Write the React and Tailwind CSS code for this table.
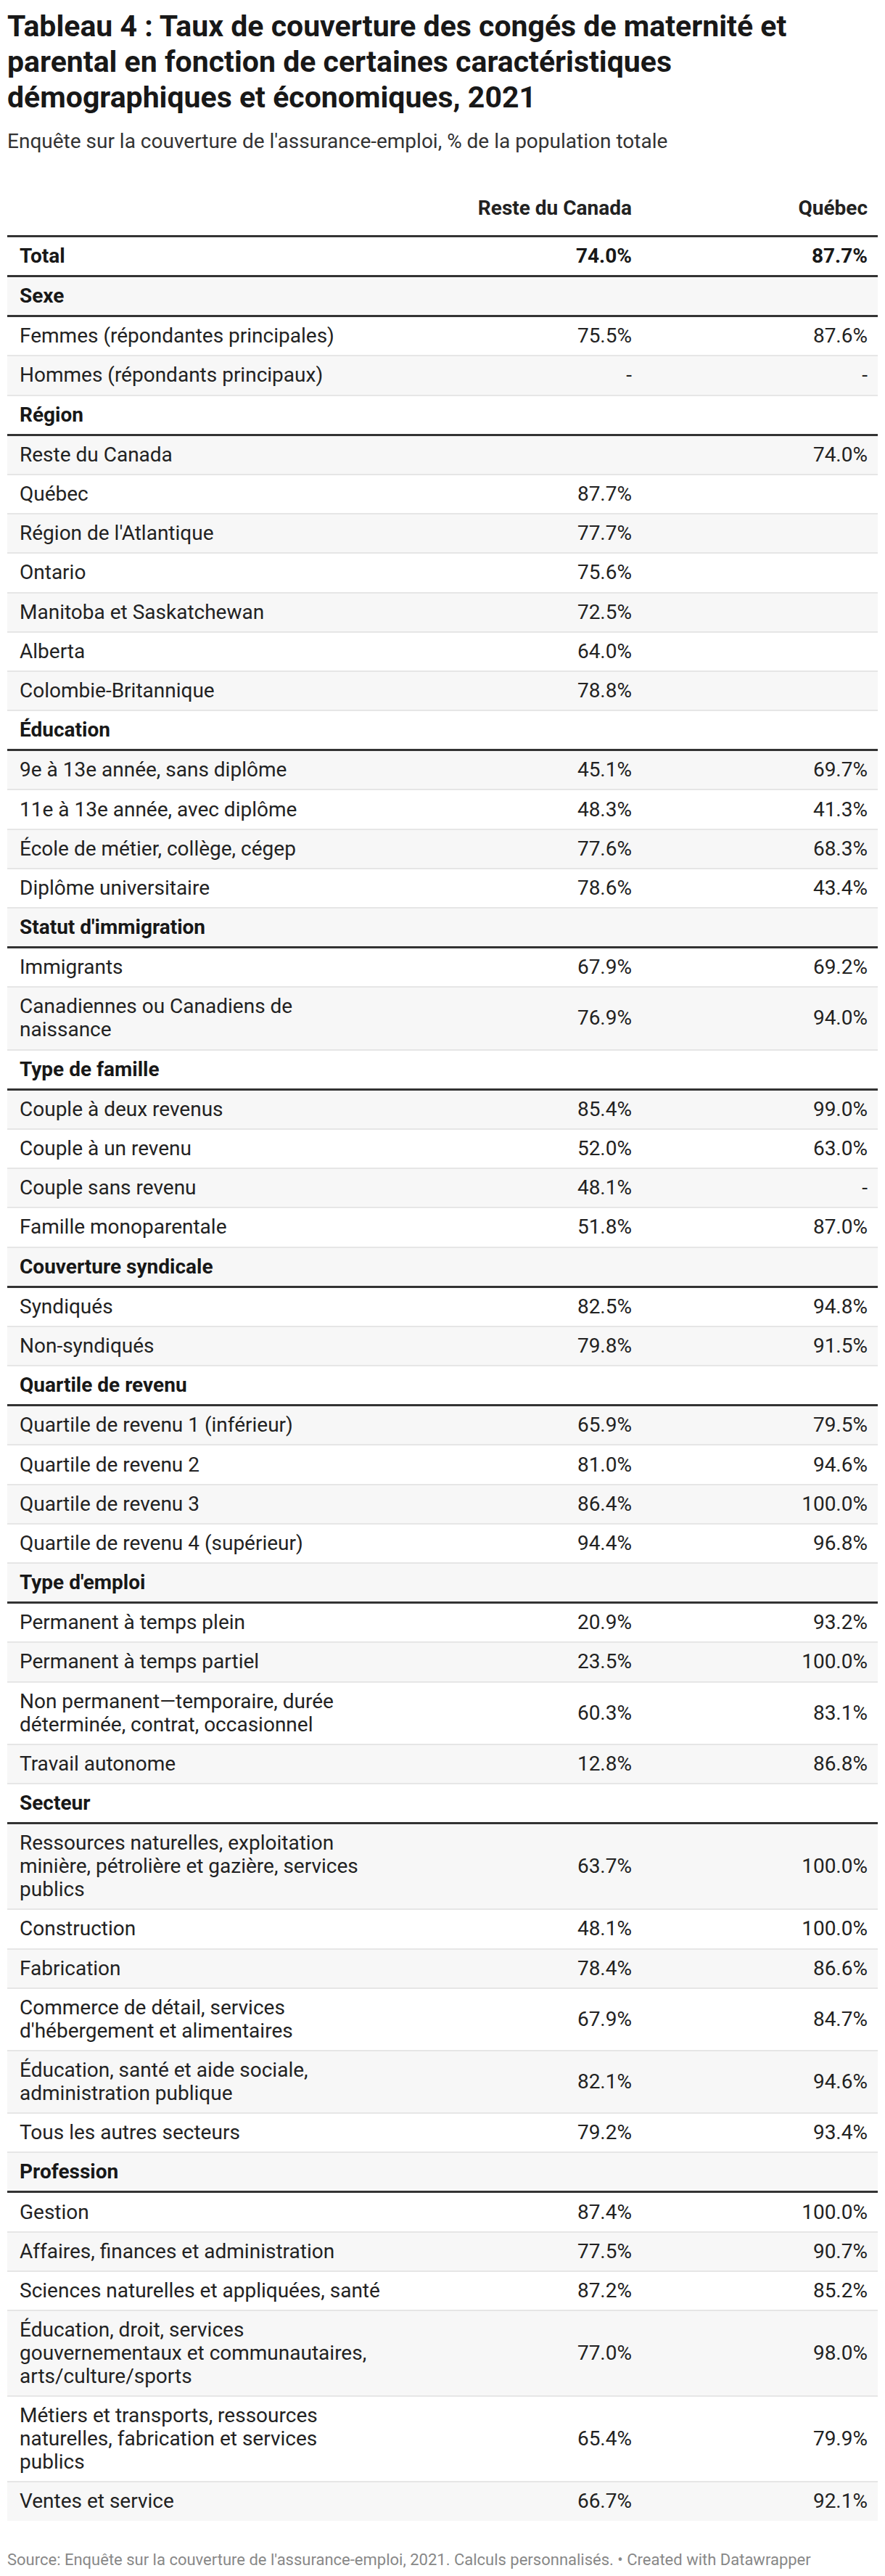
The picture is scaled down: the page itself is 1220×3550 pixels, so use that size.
import React from "react";

const groups = [
  {
    title: "Sexe",
    rows: [
      ["Femmes (répondantes principales)", "75.5%", "87.6%"],
      ["Hommes (répondants principaux)", "-", "-"],
    ],
  },
  {
    title: "Région",
    rows: [
      ["Reste du Canada", "", "74.0%"],
      ["Québec", "87.7%", ""],
      ["Région de l'Atlantique", "77.7%", ""],
      ["Ontario", "75.6%", ""],
      ["Manitoba et Saskatchewan", "72.5%", ""],
      ["Alberta", "64.0%", ""],
      ["Colombie-Britannique", "78.8%", ""],
    ],
  },
  {
    title: "Éducation",
    rows: [
      ["9e à 13e année, sans diplôme", "45.1%", "69.7%"],
      ["11e à 13e année, avec diplôme", "48.3%", "41.3%"],
      ["École de métier, collège, cégep", "77.6%", "68.3%"],
      ["Diplôme universitaire", "78.6%", "43.4%"],
    ],
  },
  {
    title: "Statut d'immigration",
    rows: [
      ["Immigrants", "67.9%", "69.2%"],
      ["Canadiennes ou Canadiens de naissance", "76.9%", "94.0%"],
    ],
  },
  {
    title: "Type de famille",
    rows: [
      ["Couple à deux revenus", "85.4%", "99.0%"],
      ["Couple à un revenu", "52.0%", "63.0%"],
      ["Couple sans revenu", "48.1%", "-"],
      ["Famille monoparentale", "51.8%", "87.0%"],
    ],
  },
  {
    title: "Couverture syndicale",
    rows: [
      ["Syndiqués", "82.5%", "94.8%"],
      ["Non-syndiqués", "79.8%", "91.5%"],
    ],
  },
  {
    title: "Quartile de revenu",
    rows: [
      ["Quartile de revenu 1 (inférieur)", "65.9%", "79.5%"],
      ["Quartile de revenu 2", "81.0%", "94.6%"],
      ["Quartile de revenu 3", "86.4%", "100.0%"],
      ["Quartile de revenu 4 (supérieur)", "94.4%", "96.8%"],
    ],
  },
  {
    title: "Type d'emploi",
    rows: [
      ["Permanent à temps plein", "20.9%", "93.2%"],
      ["Permanent à temps partiel", "23.5%", "100.0%"],
      ["Non permanent\u2014temporaire, durée déterminée, contrat, occasionnel", "60.3%", "83.1%"],
      ["Travail autonome", "12.8%", "86.8%"],
    ],
  },
  {
    title: "Secteur",
    rows: [
      ["Ressources naturelles, exploitation minière, pétrolière et gazière, services publics", "63.7%", "100.0%"],
      ["Construction", "48.1%", "100.0%"],
      ["Fabrication", "78.4%", "86.6%"],
      ["Commerce de détail, services d'hébergement et alimentaires", "67.9%", "84.7%"],
      ["Éducation, santé et aide sociale, administration publique", "82.1%", "94.6%"],
      ["Tous les autres secteurs", "79.2%", "93.4%"],
    ],
  },
  {
    title: "Profession",
    rows: [
      ["Gestion", "87.4%", "100.0%"],
      ["Affaires, finances et administration", "77.5%", "90.7%"],
      ["Sciences naturelles et appliquées, santé", "87.2%", "85.2%"],
      ["Éducation, droit, services gouvernementaux et communautaires, arts/culture/sports", "77.0%", "98.0%"],
      ["Métiers et transports, ressources naturelles, fabrication et services publics", "65.4%", "79.9%"],
      ["Ventes et service", "66.7%", "92.1%"],
    ],
  },
];

// flatten groups so the stripes run over the whole table
const rows = [];
groups.forEach((g) => {
  rows.push({ group: true, label: g.title });
  g.rows.forEach((r) => rows.push({ group: false, label: r[0], a: r[1], b: r[2] }));
});

const Row = ({ row, index, last }) => {
  const bg = index % 2 === 1 ? "bg-[#f7f7f7]" : "bg-white";
  let border = "border-b-2 border-[#e6e6e6]";
  if (row.group) border = "border-b-[3px] border-[#333333]";
  if (last) border = "";
  return (
    <div className={`grid grid-cols-[550px_325px_325px] ${bg} ${border}`}>
      <div
        className={`pl-[17px] pr-[33px] py-[10.1px] leading-[32px] ${
          row.group ? "font-bold text-[#181818]" : "text-[#222222]"
        }`}
      >
        {row.label}
      </div>
      <div className="flex items-center justify-end pr-[14px] leading-[32px] text-[#222222]">
        {row.a}
      </div>
      <div className="flex items-center justify-end pr-[14px] leading-[32px] text-[#222222]">
        {row.b}
      </div>
    </div>
  );
};

export default function App() {
  return (
    <div className="w-[1220px] bg-white px-[10px] pt-[12px] pb-[7px] font-[Roboto,sans-serif]">
      <h1 className="text-[41px] leading-[49px] font-bold text-[#181818]">
        Tableau 4 : Taux de couverture des congés de maternité et parental en fonction de certaines
        caractéristiques démographiques et économiques, 2021
      </h1>
      <p className="mt-[18px] text-[28px] leading-[36px] text-[#333333]">
        Enquête sur la couverture de l'assurance-emploi, % de la population totale
      </p>

      <div className="mt-[48px] text-[28px]">
        <div className="grid grid-cols-[550px_325px_325px] border-b-[3px] border-[#333333] font-bold text-[#222222]">
          <div className="pl-[17px] pt-[10px] pb-[21px] leading-[32px]"></div>
          <div className="pr-[14px] pt-[10px] pb-[21px] leading-[32px] text-right">Reste du Canada</div>
          <div className="pr-[14px] pt-[10px] pb-[21px] leading-[32px] text-right">Québec</div>
        </div>

        <div className="grid grid-cols-[550px_325px_325px] border-b-[3px] border-[#333333] bg-white font-bold text-[#181818]">
          <div className="pl-[17px] py-[10px] leading-[32px]">Total</div>
          <div className="flex items-center justify-end pr-[14px] leading-[32px]">74.0%</div>
          <div className="flex items-center justify-end pr-[14px] leading-[32px]">87.7%</div>
        </div>

        {rows.map((row, i) => (
          <Row key={i} row={row} index={i + 1} last={i === rows.length - 1} />
        ))}
      </div>

      <p className="mt-[41px] text-[22px] leading-[26px] text-[#888888]">
        Source: Enquête sur la couverture de l'assurance-emploi, 2021. Calculs personnalisés. • Created with Datawrapper
      </p>
    </div>
  );
}
